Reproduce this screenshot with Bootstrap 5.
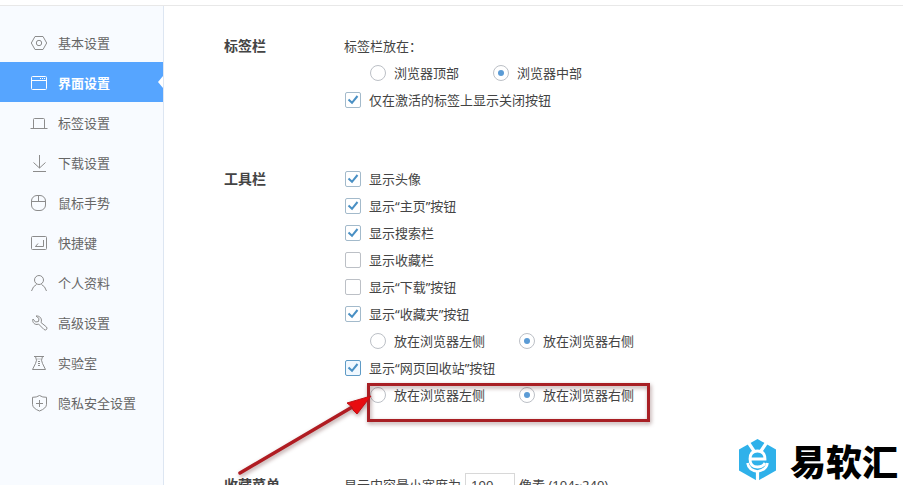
<!DOCTYPE html>
<html lang="zh-CN">
<head>
<meta charset="utf-8">
<meta name="viewport" content="width=device-width, initial-scale=1">
<title>界面设置</title>
<link href="https://cdn.jsdelivr.net/npm/bootstrap@5.3.0/dist/css/bootstrap.min.css" rel="stylesheet">
<style>
body{font-family:"Noto Sans","Noto Sans CJK SC",sans-serif;font-size:13px;line-height:20px;color:#444;background:#fff}
.page{border-top:1px solid #e8e8e8;margin-top:5px}
.side{width:164px;background:#f8fbff;border-right:1px solid #dde6f2;padding-top:16px}
.side .nav-link{height:40px;padding:2px 0 0 30px;gap:10px;color:#666;border-radius:0}
.side .nav-link svg{width:18px;height:18px;fill:none;stroke:#8c8c8c;stroke-width:1}
.side .nav-link.active{background:#56a5ff;color:#fff;font-weight:700;position:relative}
.side .nav-link.active svg{stroke:#fff}
.side .nav-link.active::after{content:"";position:absolute;right:0;top:14px;border:6px solid transparent;border-left-width:0;border-right:5px solid #fff}
.settings{padding:26px 0 0 60px}
.group{margin-bottom:52px}
.group-last{padding-top:11px}
.group-name{width:120px;line-height:27px;font-size:14px;font-weight:700;margin:0}
.line{height:27px}
.sub{padding-left:26px;gap:34px}
.choice{gap:8px}
.choice .form-check-input{width:16px;height:16px;margin:0;border-color:#bcc0c6;background-color:#fff;background-size:100% 100%;box-shadow:none}
.tick{padding-left:1px}
.tick .form-check-input{border-radius:2px}
.tick .form-check-input:checked{background-color:#fff;border-color:#a3bacb;background-image:url("data:image/svg+xml,%3Csvg xmlns='http://www.w3.org/2000/svg' viewBox='0 0 14 14'%3E%3Cpath d='M2.5 6.5 6 9.8 11.5 3' fill='none' stroke='%234a90c4' stroke-width='2'/%3E%3C/svg%3E")}
.tick .form-check-input.current{border-color:#5f9bc6;background-color:#f0f8ff}
.choice .form-check-input[type=radio]:checked{background-color:#fff;background-image:url("data:image/svg+xml,%3Csvg xmlns='http://www.w3.org/2000/svg' viewBox='0 0 14 14'%3E%3Ccircle cx='7' cy='7' r='3' fill='%235b9bd5'/%3E%3C/svg%3E")}
.size-box{width:50px;height:24px;padding:0 5px;border:1px solid #d8d8d8;border-radius:0;font-size:13px;color:#444}
.callout{position:absolute;left:230px;top:376px;width:430px;height:109px;pointer-events:none;filter:drop-shadow(1px 2px 2px rgba(60,0,0,.4))}
.brand{position:absolute;right:5px;bottom:0;gap:14px;height:50px}
.brand-name{font:oblique 8deg 900 36px/48px "Noto Sans CJK SC",sans-serif;color:#000}
</style>
<script src="https://cdn.jsdelivr.net/npm/bootstrap@5.3.0/dist/js/bootstrap.bundle.min.js"></script>
</head>
<body class="vh-100 overflow-hidden position-relative d-flex flex-column">
<div class="page d-flex flex-grow-1">
  <nav class="side nav nav-pills flex-column flex-nowrap flex-shrink-0">
    <a class="nav-link d-flex align-items-center" href="#"><svg viewBox="0 0 18 18"><path d="M5 2.500h8l3.700 6.500-3.700 6.500H5L1.300 9z"/><circle cx="9" cy="9" r="2.700"/></svg>基本设置</a>
    <a class="nav-link d-flex align-items-center active" aria-current="page" href="#"><svg viewBox="0 0 18 18"><rect x="1.500" y="2.500" width="15" height="13" rx="1"/><path d="M1.500 6.500h15M10 4.500h1M12 4.500h1M14 4.500h1"/></svg>界面设置</a>
    <a class="nav-link d-flex align-items-center" href="#"><svg viewBox="0 0 18 18"><path d="M.5 14.500h17M3.500 14.500v-9q0-1 1-1h9q1 0 1 1v9"/></svg>标签设置</a>
    <a class="nav-link d-flex align-items-center" href="#"><svg viewBox="0 0 18 18"><path d="M9.500 1v13M3.500 8.500l6 5.500 6-5.500M3 17.500h13"/></svg>下载设置</a>
    <a class="nav-link d-flex align-items-center" href="#"><svg viewBox="0 0 18 18"><rect x="1.500" y="1.500" width="14" height="15" rx="5.500"/><path d="M1.500 7.500h14M8.500 1.500v6"/></svg>鼠标手势</a>
    <a class="nav-link d-flex align-items-center" href="#"><svg viewBox="0 0 18 18"><rect x="1.500" y="2.500" width="15" height="13" rx="1"/><path d="M13.500 6v6.500h-8l2.500-3M5.500 12.500h4"/></svg>快捷键</a>
    <a class="nav-link d-flex align-items-center" href="#"><svg viewBox="0 0 18 18"><circle cx="9" cy="6" r="4.500"/><path d="M1.500 17q1.500-5 5-6.500M11.500 10.500q3.500 1.500 5 6.500"/></svg>个人资料</a>
    <a class="nav-link d-flex align-items-center" href="#"><svg viewBox="0 0 18 18"><path d="M6 2l3 2.500-.5 3-3 .5-2.500-3C2 7 3.500 10.500 7 10.500l1.500-.5 5.500 5.500q1.500 1 2.500 0 1-1.500 0-2.500L11 8.500C12.500 5 10 1.500 6 2z"/></svg>高级设置</a>
    <a class="nav-link d-flex align-items-center" href="#"><svg viewBox="0 0 18 18"><path d="M4 2.500h10M5.500 2.500q2 4 0 7l-3 6h13l-3-6q-2-3 0-7"/><path d="M7.500 5h1M9.500 5h1M8 7.500h2M8 9.500h2M8 11.500h2"/></svg>实验室</a>
    <a class="nav-link d-flex align-items-center" href="#"><svg viewBox="0 0 18 18"><path d="M9.500 1.500q3 2 7 1.800v7q0 4-7 6.700-7-2.700-7-6.700v-7q4 .2 7-1.800zM9.500 6v7M6 9.500h7"/></svg>隐私安全设置</a>
  </nav>
  <main class="settings flex-grow-1">
    <section class="group d-flex">
      <h2 class="group-name">标签栏</h2>
      <div>
        <div class="line d-flex align-items-center">标签栏放在：</div>
        <div class="line sub d-flex align-items-center">
          <label class="choice d-flex align-items-center"><input class="form-check-input" type="radio" name="tabs">浏览器顶部</label>
          <label class="choice d-flex align-items-center"><input class="form-check-input" type="radio" name="tabs" checked>浏览器中部</label>
        </div>
        <label class="line tick choice d-flex align-items-center"><input class="form-check-input" type="checkbox" checked>仅在激活的标签上显示关闭按钮</label>
      </div>
    </section>
    <section class="group d-flex">
      <h2 class="group-name">工具栏</h2>
      <div>
        <label class="line tick choice d-flex align-items-center"><input class="form-check-input" type="checkbox" checked>显示头像</label>
        <label class="line tick choice d-flex align-items-center"><input class="form-check-input" type="checkbox" checked>显示“主页”按钮</label>
        <label class="line tick choice d-flex align-items-center"><input class="form-check-input" type="checkbox" checked>显示搜索栏</label>
        <label class="line tick choice d-flex align-items-center"><input class="form-check-input" type="checkbox">显示收藏栏</label>
        <label class="line tick choice d-flex align-items-center"><input class="form-check-input" type="checkbox">显示“下载”按钮</label>
        <label class="line tick choice d-flex align-items-center"><input class="form-check-input" type="checkbox" checked>显示“收藏夹”按钮</label>
        <div class="line sub d-flex align-items-center">
          <label class="choice d-flex align-items-center"><input class="form-check-input" type="radio" name="fav">放在浏览器左侧</label>
          <label class="choice d-flex align-items-center"><input class="form-check-input" type="radio" name="fav" checked>放在浏览器右侧</label>
        </div>
        <label class="line tick choice d-flex align-items-center"><input class="form-check-input current" type="checkbox" checked>显示“网页回收站”按钮</label>
        <div class="line sub d-flex align-items-center">
          <label class="choice d-flex align-items-center"><input class="form-check-input" type="radio" name="bin">放在浏览器左侧</label>
          <label class="choice d-flex align-items-center"><input class="form-check-input" type="radio" name="bin" checked>放在浏览器右侧</label>
        </div>
      </div>
    </section>
    <section class="group group-last d-flex">
      <h2 class="group-name">收藏菜单</h2>
      <div class="line d-flex align-items-center gap-1">
        <label for="menu-width">显示内容最小宽度为</label>
        <input id="menu-width" class="form-control size-box" type="text" value="190">
        <span>像素 (104~240)</span>
      </div>
    </section>
  </main>
</div>
<svg class="callout" viewBox="0 0 430 109" aria-hidden="true">
  <rect x="138.500" y="8.500" width="280" height="36" fill="none" stroke="#a81f24" stroke-width="3"/>
  <path d="M10 97L124 30" stroke="#b01c22" stroke-width="3.500" stroke-linecap="round"/>
  <path d="M141 20L117 27l5 4 1 3 4 4z" fill="#e80c10" stroke="#c01015"/>
</svg>
<div class="brand d-flex align-items-center">
  <svg width="37" height="42" viewBox="0 0 37 42" aria-hidden="true"><path d="M18.500 0L37 10.500v21L18.500 42 0 31.500v-21z" fill="#2fb1ea"/><path d="M9 3l6 9M28 3l-6 9M18.500 33v9" fill="none" stroke="#fff" stroke-width="3.200"/><path d="M8.500 24q1 7 10 8.500 9-1.500 10-8.500" fill="none" stroke="#fff" stroke-width="2.600"/><path d="M26 24q-2 4-7.500 4-7.500 0-7.500-8t7.500-8q7.500 0 7.500 8H12" fill="none" stroke="#fff" stroke-width="2.800"/></svg>
  <span class="brand-name">易软汇</span>
</div>
</body>
</html>
